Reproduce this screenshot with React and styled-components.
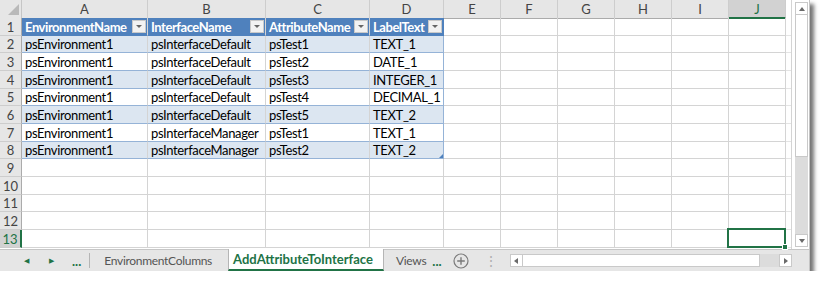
import styled, { createGlobalStyle } from 'styled-components'

const GlobalStyle = createGlobalStyle`
  * { box-sizing: border-box; }
  body {
    margin: 0;
    background: #ffffff;
    font-family: 'Lato', 'Liberation Sans', sans-serif;
  }
`

const COLS = '22px 126px 118px 104px 74px 57px 57px 57px 57px 57px 57px 1fr'
const LETTERS = ['A', 'B', 'C', 'D', 'E', 'F', 'G', 'H', 'I', 'J']
const HEIGHTS = [18, 17, 18, 18, 17, 18, 18, 17, 18, 18, 17, 18, 18]

const HEAD = ['EnvironmentName', 'InterfaceName', 'AttributeName', 'LabelText']
const DATA = [
    ['psEnvironment1', 'psInterfaceDefault', 'psTest1', 'TEXT_1'],
    ['psEnvironment1', 'psInterfaceDefault', 'psTest2', 'DATE_1'],
    ['psEnvironment1', 'psInterfaceDefault', 'psTest3', 'INTEGER_1'],
    ['psEnvironment1', 'psInterfaceDefault', 'psTest4', 'DECIMAL_1'],
    ['psEnvironment1', 'psInterfaceDefault', 'psTest5', 'TEXT_2'],
    ['psEnvironment1', 'psInterfaceManager', 'psTest1', 'TEXT_1'],
    ['psEnvironment1', 'psInterfaceManager', 'psTest2', 'TEXT_2'],
]

export default function App() {
    return (
        <>
            <GlobalStyle />
            <Window>
                <Main>
                    <Sheet>
                        <Row $h={18}>
                            <Corner><CornerMark /></Corner>
                            {LETTERS.map(l => (
                                <ColHead key={l} $active={l === 'J'}>{l}</ColHead>
                            ))}
                            <Filler $head />
                        </Row>
                        {HEIGHTS.map((h, i) => {
                            const n = i + 1
                            let cells
                            if (n === 1) {
                                cells = HEAD.map((t, c) => (
                                    <TableHead key={c} $last={c === 3}>
                                        <span>{t}</span>
                                        <FilterBtn><Tri /></FilterBtn>
                                    </TableHead>
                                ))
                            } else if (n <= 8) {
                                cells = DATA[n - 2].map((t, c) => (
                                    <TableCell key={c} $band={n % 2 === 0} $last={c === 3}>
                                        {t}
                                        {n === 8 && c === 3 && <ResizeGrip />}
                                    </TableCell>
                                ))
                            } else {
                                cells = [0, 1, 2, 3].map(c => <Cell key={c} />)
                            }
                            return (
                                <Row key={n} $h={h}>
                                    <RowHead $active={n === 13}>{n}</RowHead>
                                    {cells}
                                    {LETTERS.slice(4).map(l => (
                                        <Cell key={l}>
                                            {n === 13 && l === 'J' && <Selection><Handle /></Selection>}
                                        </Cell>
                                    ))}
                                    <Filler />
                                </Row>
                            )
                        })}
                    </Sheet>
                    <VScroll>
                        <ScrollBtn><ArrowUp /></ScrollBtn>
                        <VThumb />
                        <VTrack />
                        <ScrollBtn><ArrowDown /></ScrollBtn>
                    </VScroll>
                </Main>
                <TabBar>
                    <NavArrow $left>◀</NavArrow>
                    <NavArrow>▶</NavArrow>
                    <More>...</More>
                    <Divider />
                    <Tab>EnvironmentColumns</Tab>
                    <ActiveTab>AddAttributeToInterface</ActiveTab>
                    <Tab $narrow>Views</Tab>
                    <More $tight>...</More>
                    <AddSheet>
                        <svg width="16" height="16" viewBox="0 0 16 16">
                            <circle cx="8" cy="8" r="7" fill="none" stroke="#7a7a7a" strokeWidth="1.2" />
                            <path d="M8 4.2v7.6M4.2 8h7.6" stroke="#7a7a7a" strokeWidth="1.4" />
                        </svg>
                    </AddSheet>
                    <Grip>⋮</Grip>
                    <HScroll>
                        <HBtn><ArrowLeft /></HBtn>
                        <HThumb />
                        <HTrack />
                        <HBtn><ArrowRight /></HBtn>
                    </HScroll>
                </TabBar>
            </Window>
        </>
    )
}

const Window = styled.div`
    width: 810px;
    height: 271px;
    display: flex;
    flex-direction: column;
    background: #ffffff;
    border-right: 1px solid #c4c4c4;
    box-shadow: 4px 4px 4px rgba(0, 0, 0, 0.55);
`

const Main = styled.div`
    display: flex;
    height: 249px;
`

const Sheet = styled.div`
    flex: 1;
    display: flex;
    flex-direction: column;
    border-right: 1px solid #d4d4d4;
`

const Row = styled.div`
    display: grid;
    grid-template-columns: ${COLS};
    height: ${p => p.$h}px;
`

const Corner = styled.div`
    background: #e6e6e6;
    border-right: 1px solid #c6c6c6;
    border-bottom: 1px solid #ababab;
    display: flex;
    align-items: flex-end;
    justify-content: flex-end;
    padding: 0 2px 3px 0;
`

const CornerMark = styled.div`
    width: 0;
    height: 0;
    border-left: 11px solid transparent;
    border-bottom: 11px solid #b9b9b9;
`

const ColHead = styled.div`
    background: ${p => (p.$active ? '#d2d2d2' : '#e6e6e6')};
    color: ${p => (p.$active ? '#217346' : '#444444')};
    border-right: 1px solid #cdcdcd;
    border-bottom: ${p => (p.$active ? '2px solid #217346' : '1px solid #ababab')};
    font-size: 13px;
    display: flex;
    align-items: center;
    justify-content: center;
    padding-top: ${p => (p.$active ? '1px' : '0')};
`

const Filler = styled.div`
    background: #ffffff;
    border-bottom: ${p => (p.$head ? 'none' : '1px solid #e4e4e4')};
`

const RowHead = styled.div`
    background: ${p => (p.$active ? '#d2d2d2' : '#e6e6e6')};
    color: ${p => (p.$active ? '#217346' : '#444444')};
    border-right: ${p => (p.$active ? '2px solid #217346' : '1px solid #ababab')};
    border-bottom: 1px solid #cdcdcd;
    font-size: 13px;
    display: flex;
    align-items: center;
    justify-content: center;
`

const Cell = styled.div`
    position: relative;
    border-right: 1px solid #d4d4d4;
    border-bottom: 1px solid #d4d4d4;
`

const TableHead = styled.div`
    background: #4f81bd;
    color: #ffffff;
    font-weight: bold;
    font-size: 13px;
    letter-spacing: -0.45px;
    border-right: 1px solid ${p => (p.$last ? '#4f81bd' : '#d4d4d4')};
    border-bottom: 1px solid #4f81bd;
    display: flex;
    align-items: center;
    padding: 0 1px 0 3px;
    white-space: nowrap;
    overflow: hidden;
    span { flex: 1; }
`

const FilterBtn = styled.div`
    width: 14px;
    height: 13px;
    background: #f2f2f2;
    border: 1px solid #c9c9c9;
    display: flex;
    align-items: center;
    justify-content: center;
`

const Tri = styled.div`
    width: 0;
    height: 0;
    border-left: 3px solid transparent;
    border-right: 3px solid transparent;
    border-top: 3px solid #666666;
`

const TableCell = styled.div`
    position: relative;
    background: ${p => (p.$band ? '#dce6f1' : '#ffffff')};
    color: #000000;
    font-size: 13px;
    letter-spacing: -0.35px;
    border-right: 1px solid ${p => (p.$last ? '#95b3d7' : '#d4d4d4')};
    border-bottom: 1px solid #95b3d7;
    display: flex;
    align-items: center;
    padding-left: 3px;
    white-space: nowrap;
`

const ResizeGrip = styled.div`
    position: absolute;
    right: 0;
    bottom: 0;
    width: 0;
    height: 0;
    border-left: 4px solid transparent;
    border-bottom: 4px solid #4f81bd;
`

const Selection = styled.div`
    position: absolute;
    left: -2px;
    top: -2px;
    right: -1px;
    bottom: -1px;
    border: 2px solid #217346;
`

const Handle = styled.div`
    position: absolute;
    right: -4px;
    bottom: -4px;
    width: 6px;
    height: 6px;
    background: #217346;
    border: 1px solid #ffffff;
`

const VScroll = styled.div`
    width: 17px;
    background: #ffffff;
    display: flex;
    flex-direction: column;
    align-items: center;
    padding: 2px 0 2px 2px;
`

const ScrollBtn = styled.div`
    width: 13px;
    height: 13px;
    border: 1px solid #c9c9c9;
    background: #ffffff;
    display: flex;
    align-items: center;
    justify-content: center;
`

const VThumb = styled.div`
    width: 13px;
    height: 142px;
    background: #ffffff;
    border: 1px solid #c9c9c9;
    border-top: none;
`

const VTrack = styled.div`
    width: 13px;
    flex: 1;
    background: #dcdcdc;
`

const ArrowUp = styled.div`
    width: 0;
    height: 0;
    border-left: 3.5px solid transparent;
    border-right: 3.5px solid transparent;
    border-bottom: 4px solid #6a6a6a;
`

const ArrowDown = styled(ArrowUp)`
    border-bottom: none;
    border-top: 4px solid #6a6a6a;
`

const ArrowLeft = styled.div`
    width: 0;
    height: 0;
    border-top: 3.5px solid transparent;
    border-bottom: 3.5px solid transparent;
    border-right: 4px solid #6a6a6a;
`

const ArrowRight = styled(ArrowLeft)`
    border-right: none;
    border-left: 4px solid #6a6a6a;
`

const TabBar = styled.div`
    flex: 1;
    display: flex;
    align-items: stretch;
    background: #e6e6e6;
    border-top: 1px solid #c6c6c6;
    font-size: 12px;
    color: #444444;
    padding-left: 20px;
`

const NavArrow = styled.div`
    display: flex;
    align-items: center;
    font-size: 7px;
    color: #217346;
    width: ${p => (p.$left ? '25px' : '23px')};
    padding-left: 4px;
`

const More = styled.div`
    display: flex;
    align-items: center;
    color: #217346;
    font-weight: bold;
    font-size: 13px;
    padding: 0 ${p => (p.$tight ? '11px' : '8px')} 0 ${p => (p.$tight ? '6px' : '4px')};
`

const Divider = styled.div`
    width: 1px;
    margin: 3px 14px 3px 0;
    background: #b5b5b5;
`

const Tab = styled.div`
    display: flex;
    align-items: center;
    padding: 0 ${p => (p.$narrow ? '0' : '16px')} 0 ${p => (p.$narrow ? '12px' : '0')};
    color: #555555;
    font-size: 12px;
    letter-spacing: -0.3px;
    white-space: nowrap;
`

const ActiveTab = styled.div`
    display: flex;
    align-items: center;
    background: #ffffff;
    color: #217346;
    font-weight: bold;
    font-size: 13px;
    padding: 0 10px 0 4px;
    margin-top: -1px;
    border-left: 1px solid #b5b5b5;
    border-right: 1px solid #b5b5b5;
    border-bottom: 2px solid #217346;
    white-space: nowrap;
`

const AddSheet = styled.div`
    display: flex;
    align-items: center;
    padding: 0 12px 0 0;
`

const Grip = styled.div`
    display: flex;
    align-items: center;
    color: #b0b0b0;
    font-size: 14px;
    padding: 0 12px 0 3px;
`

const HScroll = styled.div`
    flex: 1;
    display: flex;
    align-items: center;
    margin-right: 17px;
`

const HBtn = styled.div`
    width: 13px;
    height: 13px;
    background: #ffffff;
    border: 1px solid #c9c9c9;
    display: flex;
    align-items: center;
    justify-content: center;
`

const HThumb = styled.div`
    width: 237px;
    height: 13px;
    background: #ffffff;
    border: 1px solid #c9c9c9;
    border-left: none;
`

const HTrack = styled.div`
    flex: 1;
    height: 13px;
    background: #dcdcdc;
`
